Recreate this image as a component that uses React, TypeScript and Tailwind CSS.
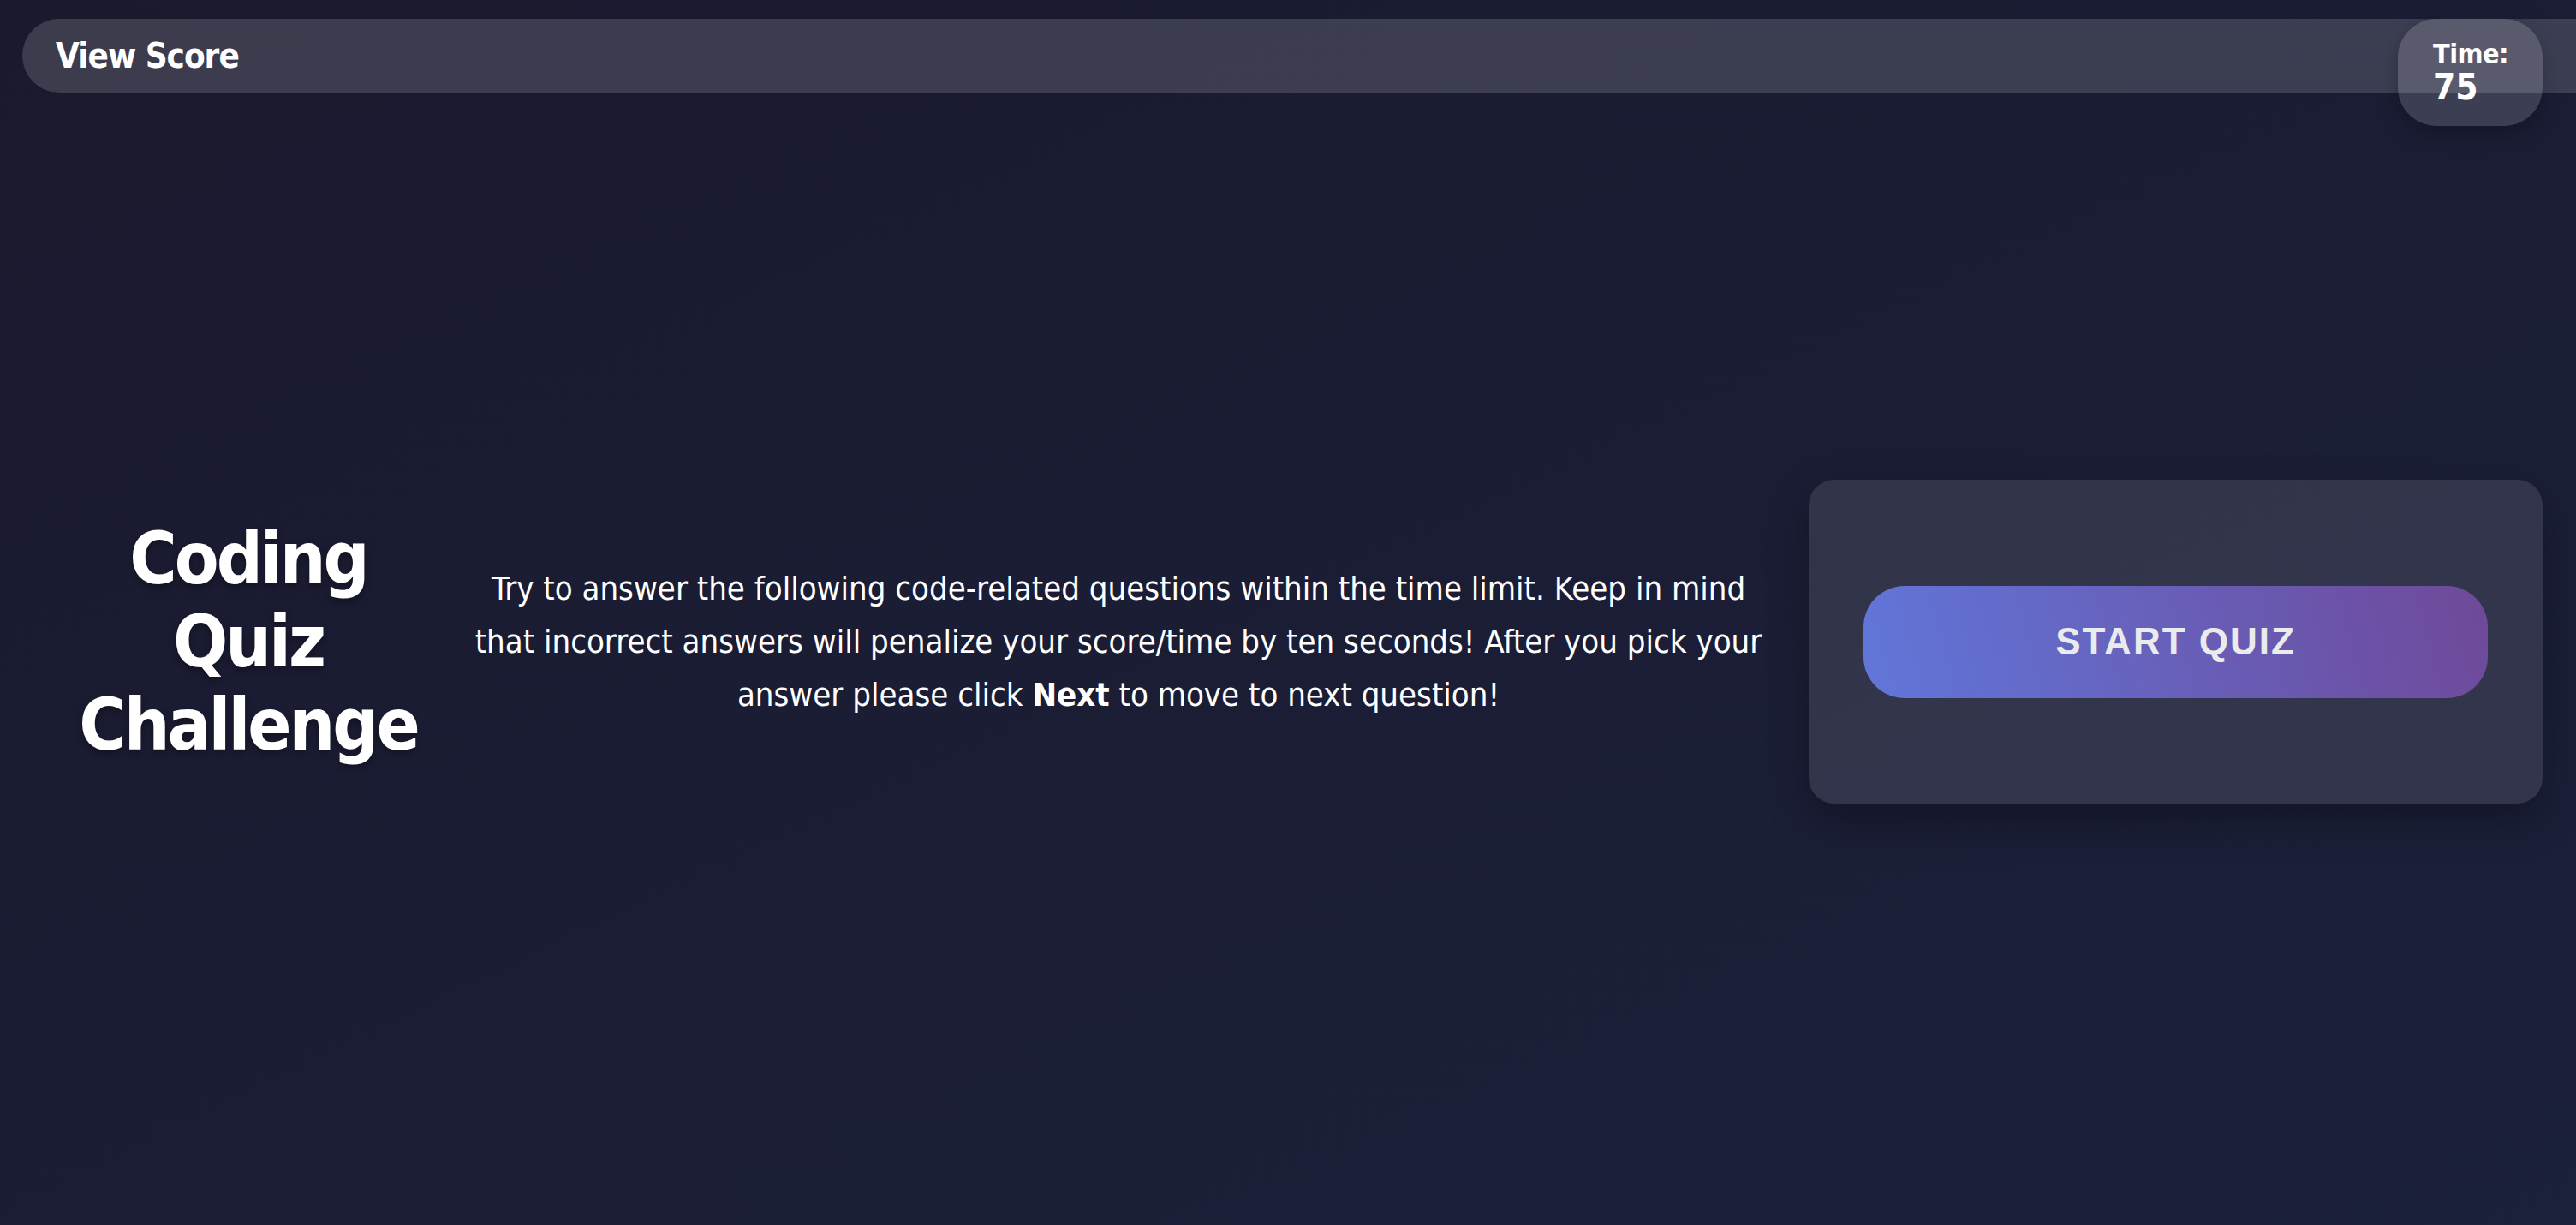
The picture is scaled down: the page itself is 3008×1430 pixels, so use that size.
import React from "react";

export default function App() {
  const font = { fontFamily: '"DejaVu Sans Condensed", "DejaVu Sans", Verdana, sans-serif' };
  return (
    <div
      className="min-h-screen w-full overflow-hidden bg-gradient-to-br from-[#1a1a2e] to-[#1b203b] text-white"
      style={font}
    >
      <header className="relative pl-[26px] pt-[22px]">
        <div className="flex h-[86px] items-center rounded-l-full bg-white/15 pl-[39px]">
          <span className="text-[40px] font-bold leading-none tracking-[-1px]">View Score</span>
        </div>
        <div className="absolute right-[39px] top-[22px] flex h-[125px] w-[169px] flex-col rounded-[45px] bg-white/15 pl-[41px] pt-[22px] shadow-[0_8px_24px_rgba(0,0,0,0.25)]">
          <span className="text-[32px] font-bold leading-[38px] tracking-[-0.5px]">Time:</span>
          <span className="text-[42px] font-bold leading-[40px]">75</span>
        </div>
      </header>
      <main className="flex h-[calc(100vh-108px)] items-center px-[40px] pb-[40px] pr-[39px]">
        <h1 className="w-[500px] shrink-0 text-center text-[84px] font-bold leading-[97px] tracking-[-3px] [text-shadow:0_4px_8px_rgba(0,0,0,0.35)]">
          Coding
          <br />
          Quiz
          <br />
          Challenge
        </h1>
        <p className="flex-1 px-[8px] text-center text-[38px] leading-[62px]">
          Try to answer the following code-related questions within the time limit. Keep in mind that
          incorrect answers will penalize your score/time by ten seconds! After you pick your answer
          please click <b>Next</b> to move to next question!
        </p>
        <div className="ml-[40px] flex h-[378px] w-[857px] shrink-0 items-center justify-center rounded-[30px] bg-white/10 shadow-[0_20px_50px_rgba(0,0,0,0.3)]">
          <button
            className="flex h-[131px] w-[729px] items-center justify-center rounded-[48px] bg-[linear-gradient(75deg,#667eea,#764ba2)] text-[44px] font-bold tracking-[2px] opacity-90"
            style={{ fontFamily: '"Liberation Sans", Arial, sans-serif' }}
          >
            START QUIZ
          </button>
        </div>
      </main>
    </div>
  );
}
